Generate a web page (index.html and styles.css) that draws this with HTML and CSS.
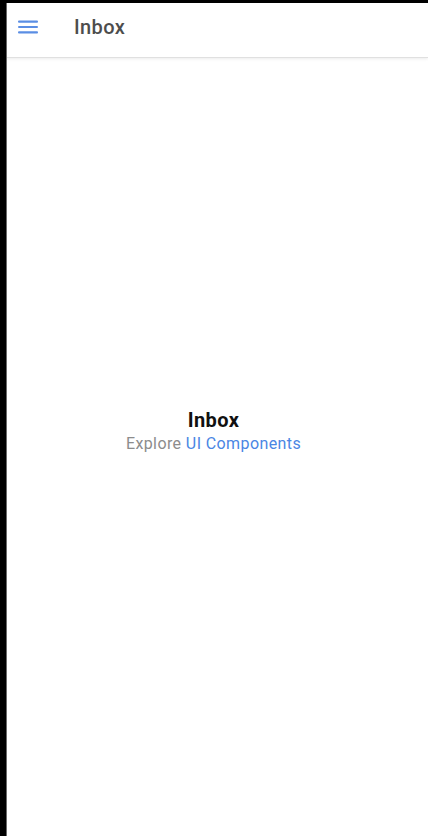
FILE: index.html
```html
<!DOCTYPE html>
<html lang="en">
<head>
<meta charset="utf-8">
<title>Inbox</title>
<link rel="stylesheet" href="styles.css">
</head>
<body>
<div class="frame">
  <div class="app">
    <header class="toolbar">
      <button class="menu-btn" aria-label="Menu">
        <svg width="20" height="14" viewBox="0 0 20 14"><rect x="0" y="0.5" width="20" height="2.2" rx="1"/><rect x="0" y="5.9" width="20" height="2.2" rx="1"/><rect x="0" y="11.3" width="20" height="2.2" rx="1"/></svg>
      </button>
      <h1 class="title">Inbox</h1>
    </header>
    <main class="content">
      <div class="container">
        <strong class="heading">Inbox</strong>
        <p class="sub">Explore <a class="link" href="#">UI Components</a></p>
      </div>
    </main>
  </div>
</div>
</body>
</html>
```
FILE: styles.css
```css
html, body {
  margin: 0;
  padding: 0;
  height: 100%;
  background: #000;
}
.frame {
  box-sizing: border-box;
  height: 100%;
  padding: 3px 0 0 6px;
  background: #000;
}
.app {
  height: 100%;
  display: flex;
  flex-direction: column;
  background: #fff;
  border-left: 1px solid #6a6a6a;
  font-family: Roboto, "Noto Sans", sans-serif;
}
.toolbar {
  box-sizing: border-box;
  height: 55px;
  flex: none;
  display: flex;
  align-items: center;
  padding-bottom: 7px;
  border-bottom: 1px solid #e0e0e0;
  box-shadow: 0 1px 3px rgba(0,0,0,0.08);
  background: #fff;
  position: relative;
  z-index: 1;
}
.menu-btn {
  border: 0;
  background: none;
  padding: 0;
  margin: 0 0 0 11px;
  width: 20px;
  height: 14px;
  display: flex;
  fill: #5b8ee4;
}
.title {
  margin: 0 0 0 36px;
  font-size: 20px;
  font-weight: 500;
  color: #4d4d4d;
  letter-spacing: 0.4px;
}
.content {
  flex: 1;
  display: flex;
  flex-direction: column;
  align-items: center;
  padding: 349px 8px 0 0;
  background: #fff;
}
.container {
  display: flex;
  flex-direction: column;
  align-items: center;
  text-align: center;
}
.heading {
  font-size: 20px;
  line-height: 26px;
  font-weight: 700;
  color: #111;
  letter-spacing: 0.4px;
}
.sub {
  margin: 0;
  font-size: 16px;
  line-height: 22px;
  color: #8c8c8c;
  letter-spacing: 0.4px;
}
.link {
  color: #4a86e4;
  text-decoration: none;
}
```
